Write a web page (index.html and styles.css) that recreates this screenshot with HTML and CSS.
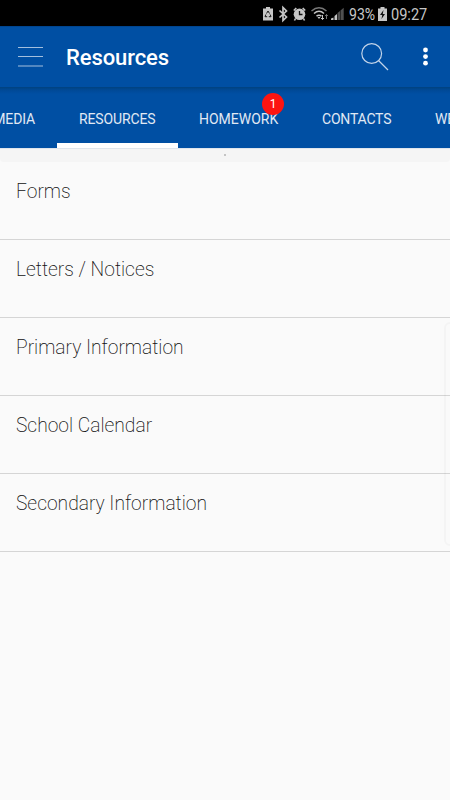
FILE: index.html
```
<!DOCTYPE html>
<html lang="en">
<head>
<meta charset="utf-8">
<title>Resources</title>
<link rel="stylesheet" href="styles.css">
</head>
<body>
<div class="status">
  <svg class="status-icons" width="84" height="26" viewBox="262 0 84 26" fill="none" stroke="#c6c6c6">
    <path d="M266 7h4v1.500h3V20.500h-10V8.500h3z" fill="#c6c6c6" stroke="none"/>
    <path d="M266.500 13.500l1.500-2.500 1.500 2.500M265.800 14.500l-.8 2.200h2.200M270.200 14.500l.8 2.200h-2.200" stroke="#171717" stroke-width="1"/>
    <path d="M279.500 10.500l7 6.500-3.500 3.500v-13l3.500 3.500-7 6.500" stroke-width="1.700"/>
    <circle cx="299.500" cy="14.300" r="5.800" fill="#c6c6c6" stroke="none"/>
    <path d="M293.800 10.500l2.500-2.500M305.200 10.500l-2.500-2.500M295.500 18.500l-1 2M303.500 18.500l1 2" stroke-width="1.600"/>
    <path d="M299.500 11v3.500h3" stroke="#111" stroke-width="1.300"/>
    <path d="M311.500 11q7.500-6.500 15 0" stroke="#777" stroke-width="1.500"/>
    <path d="M314 13.500q5-4.500 10 0M316.500 16.200q2.500-2 5 0" stroke-width="1.500"/>
    <path d="M317.500 17h3l-1.500 2z" fill="#c6c6c6" stroke="none"/>
    <path d="M322.500 15v4.500m-1.500-1.500l1.500 1.500 1.500-1.500" stroke-width="1"/>
    <path d="M326.500 19v-4.500m-1.300 1.500l1.300-1.500 1.300 1.500" stroke="#777" stroke-width="1"/>
    <g stroke="none" fill="#c6c6c6"><path d="M331 20v-1.500l2.500-1V20zM334.500 20v-4l2.500-2v6z"/><path fill="#505050" d="M337.500 20v-7l2.500-2V20zM340.500 20V10.500l3.200-2.800V20z"/></g>
  </svg>
  <span class="battery-text">93%</span>
  <svg class="battery" width="9" height="14" viewBox="0 0 9 14"><path d="M2.500 0h4v1.500H9V14H0V1.500h2.500z" fill="#c6c6c6"/><path d="M5.500 3L2 8h2.200L3.500 12 7 7H4.800z" fill="#111"/></svg>
  <span class="clock">09:27</span>
</div>
<header class="bar">
  <svg class="menu" width="26" height="22" viewBox="0 0 26 22"><path d="M0 1.500h25M0 10.500h25M0 20h25" stroke="#a3bfde" stroke-width="1.200"/></svg>
  <h1 class="title">Resources</h1>
  <svg class="search" width="28" height="28" viewBox="0 0 28 28" fill="none" stroke="#c2d4e9" stroke-width="1.200"><circle cx="10.700" cy="10.500" r="9.900"/><path d="M17.500 17.500L27 27"/></svg>
  <svg class="more" width="6" height="20" viewBox="0 0 6 20" fill="#fff"><circle cx="2.500" cy="3" r="2.400"/><circle cx="2.500" cy="9.600" r="2.400"/><circle cx="2.500" cy="16.200" r="2.400"/></svg>
</header>
<nav class="tabs">
  <a class="tab media">MEDIA</a>
  <a class="tab resources active">RESOURCES</a>
  <a class="tab homework">HOMEWORK<span class="badge">1</span></a>
  <a class="tab contacts">CONTACTS</a>
  <a class="tab web">WE</a>
</nav>
<div class="strip"><i class="dot"></i></div>
<main class="list">
  <div class="row"><span class="label">Forms</span></div>
  <div class="row"><span class="label">Letters / Notices</span></div>
  <div class="row"><span class="label">Primary Information</span></div>
  <div class="row"><span class="label">School Calendar</span></div>
  <div class="row"><span class="label">Secondary Information</span></div>
</main>
<div class="edge"></div>
</body>
</html>
```
FILE: styles.css
```
* { box-sizing: border-box; }
body {
  position: relative;
  margin: 0;
  width: 450px;
  height: 800px;
  overflow: hidden;
  background: #fafafa;
  font-family: Roboto, "Liberation Sans", sans-serif;
}
.status {
  display: flex;
  height: 26px;
  padding-left: 262px;
  background: #000;
  color: #c6c6c6;
  font-size: 16px;
  line-height: 29px;
}
.status-icons { flex: none; }
.battery-text, .clock {
  flex: none;
  transform-origin: left;
  transform: scaleX(.88);
}
.battery-text { width: 29px; margin-left: 3px; }
.battery { flex: none; margin-top: 7px; }
.clock { margin-left: 4px; transform: scaleX(.91); }
.bar {
  display: flex;
  height: 61px;
  padding-left: 18px;
  background: #004fa3;
  border-top: 1px solid #00458f;
}
.menu { margin-top: 19px; flex: none; }
.title {
  width: 295px;
  margin: 0 0 0 22px;
  color: #fff;
  font-size: 22px;
  font-weight: 500;
  letter-spacing: -.1px;
  line-height: 61px;
}
.search { margin-top: 16px; flex: none; }
.more { margin: 20px 0 0 33.5px; flex: none; }
.tabs {
  display: flex;
  height: 61px;
  overflow: hidden;
  background: linear-gradient(#00427f, #004996 3px, #004fa3 7px);
  color: #e0e9f4;
  font-size: 14px;
  letter-spacing: -.13px;
  line-height: 64px;
}
.tab {
  position: relative;
  flex: none;
  height: 61px;
  white-space: nowrap;
}
.media { width: 57px; padding-right: 22px; display: flex; justify-content: flex-end; }
.resources { width: 121px; padding-left: 22px; }
.homework { width: 122px; padding-left: 21px; letter-spacing: 0; }
.contacts { width: 113px; padding-left: 22px; letter-spacing: -.2px; }
.web { padding-left: 22px; }
.active { border-bottom: 5px solid #fff; }
.badge {
  position: absolute;
  left: 84px;
  top: 6px;
  width: 22px;
  height: 22px;
  border-radius: 50%;
  background: #fd1410;
  color: #fff;
  font-size: 12px;
  line-height: 22px;
  text-align: center;
}
.strip {
  display: flex;
  justify-content: center;
  height: 14px;
  padding-top: 5px;
  background: #f5f5f5;
  border-top: 1px solid #dfe5ec;
  border-radius: 0 0 4px 4px;
}
.dot { width: 2px; height: 2px; background: #c4c4c4; }
.row {
  height: 78px;
  padding: 17px 16px 0;
  border-bottom: 1px solid #d5d5d5;
  color: #111;
  font-size: 20px;
  font-weight: 200;
  line-height: 26px;
}
.label {
  display: inline-block;
  transform-origin: left;
  transform: translateY(-.6px) scaleX(.961);
}
.edge {
  position: absolute;
  left: 444px;
  top: 322px;
  width: 12px;
  height: 224px;
  border: 2px solid rgba(0, 0, 0, .025);
  border-radius: 7px;
}
```
